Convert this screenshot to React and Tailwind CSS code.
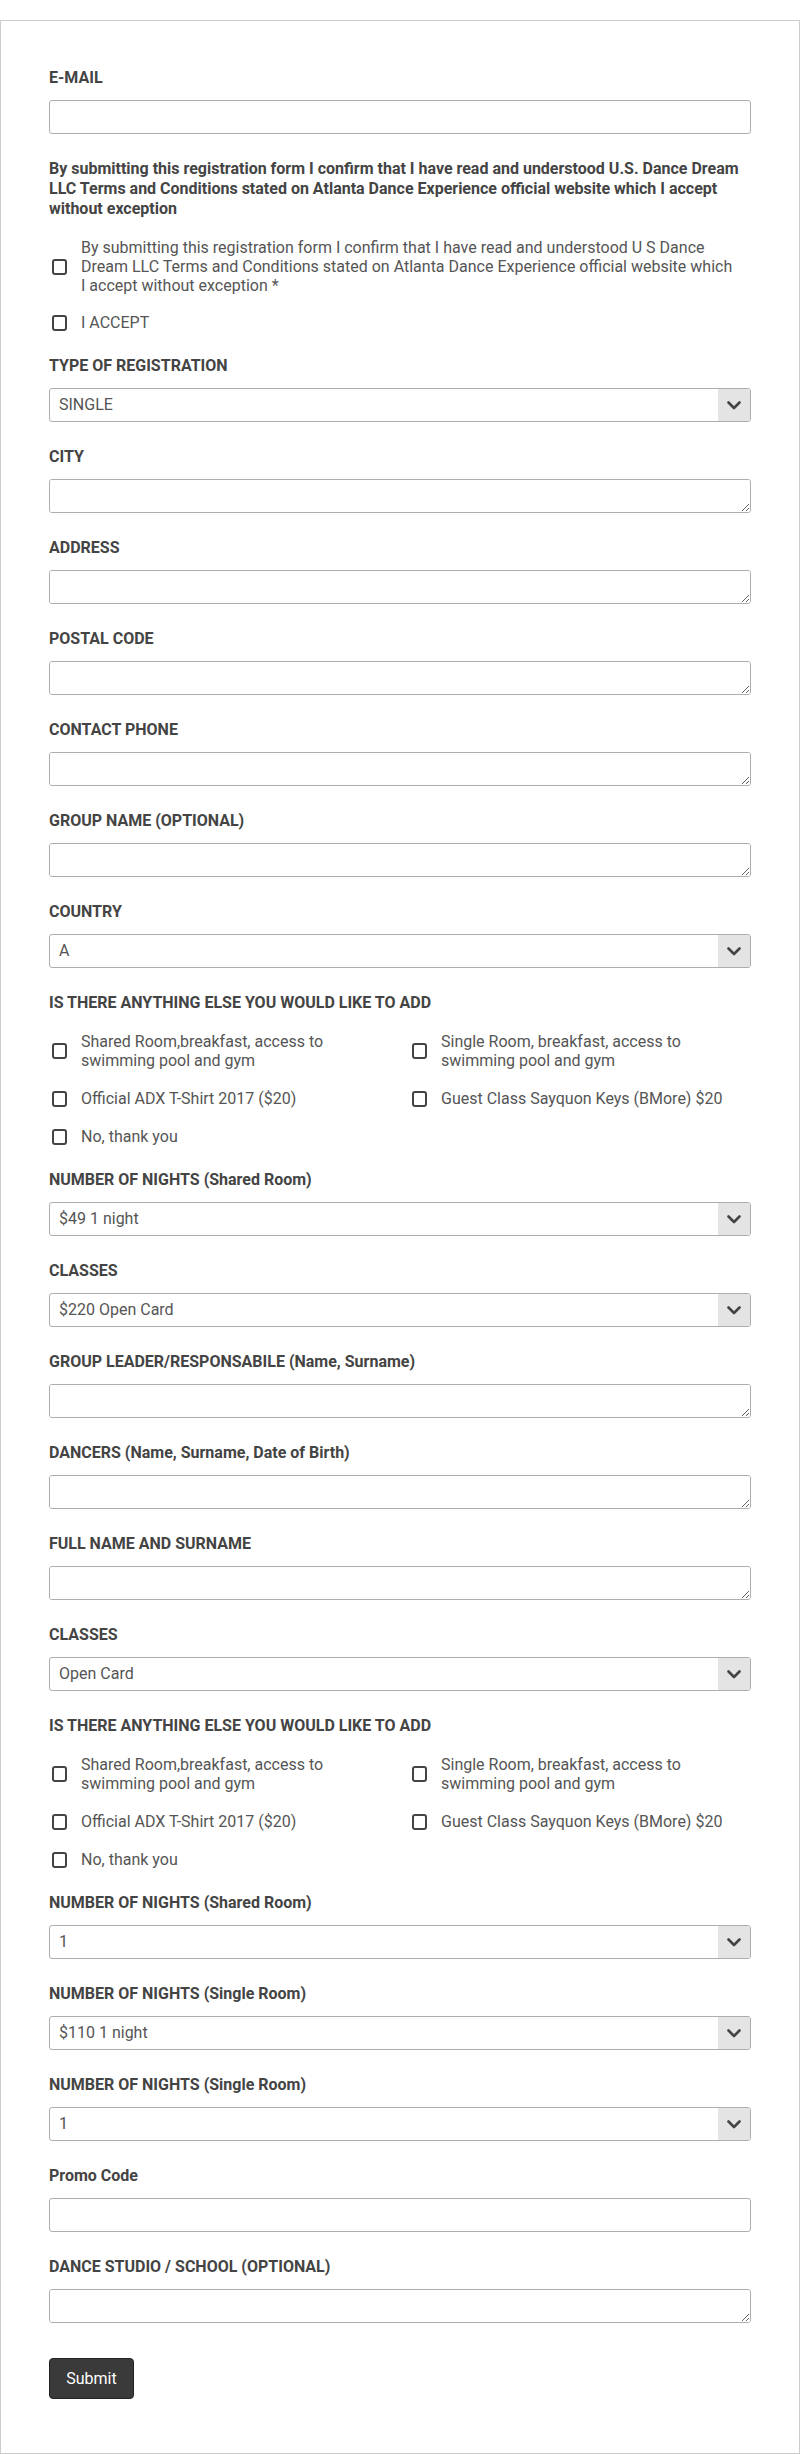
import React from "react";

const font = { fontFamily: "Roboto, 'Noto Sans', Arial, sans-serif" };

function Label({ children }) {
  return (
    <div className="text-[16px] font-bold leading-[20px] text-[#444] mb-[12px]">
      {children}
    </div>
  );
}

function TextInput({ label }) {
  return (
    <div className="mb-[25px]">
      <Label>{label}</Label>
      <input
        type="text"
        className="block w-full h-[34px] border border-[#adadad] rounded-[3px] bg-white px-[8px] text-[16px] text-[#555] outline-none"
      />
    </div>
  );
}

function TextArea({ label }) {
  return (
    <div className="mb-[25px]">
      <Label>{label}</Label>
      <textarea
        rows={1}
        className="block w-full h-[34px] min-h-[34px] border border-[#adadad] rounded-[3px] bg-white px-[8px] py-[6px] text-[16px] text-[#555] outline-none resize-y"
      />
    </div>
  );
}

function Chevron() {
  return (
    <svg width="14" height="9" viewBox="0 0 14 9" fill="none">
      <path d="M1.5 1.5 L7 7 L12.5 1.5" stroke="#444" strokeWidth="2.6" strokeLinecap="round" strokeLinejoin="round" />
    </svg>
  );
}

function Select({ label, value }) {
  return (
    <div className="mb-[25px]">
      <Label>{label}</Label>
      <div className="flex h-[34px] w-full border border-[#adadad] rounded-[3px] bg-white overflow-hidden">
        <div className="flex-1 flex items-center pl-[9px] text-[16px] text-[#555]">{value}</div>
        <div className="w-[32px] flex items-center justify-center bg-[#e4e4e4]">
          <Chevron />
        </div>
      </div>
    </div>
  );
}

function Box() {
  return (
    <span className="block shrink-0 w-[15px] h-[16px] ml-[3px] border-2 border-[#444] rounded-[3px] bg-white" />
  );
}

function Check({ children }) {
  return (
    <div className="flex items-center gap-[14px] text-[16px] leading-[19px] text-[#555]">
      <Box />
      <span>{children}</span>
    </div>
  );
}

function ExtrasGroup() {
  return (
    <div className="mb-[24px]">
      <div className="text-[16px] font-bold leading-[20px] text-[#444] mb-[19px]">
        IS THERE ANYTHING ELSE YOU WOULD LIKE TO ADD
      </div>
      <div className="grid grid-cols-[360px_1fr] gap-y-[19px]">
        <Check>
          Shared Room,breakfast, access to<br />swimming pool and gym
        </Check>
        <Check>
          Single Room, breakfast, access to<br />swimming pool and gym
        </Check>
        <Check>Official ADX T-Shirt 2017 ($20)</Check>
        <Check>Guest Class Sayquon Keys (BMore) $20</Check>
        <Check>No, thank you</Check>
      </div>
    </div>
  );
}

export default function App() {
  return (
    <div className="bg-white pt-[20px]" style={font}>
      <form
        className="flex flex-col border border-[#cccccc] bg-white px-[48px] pt-[47px] pb-[54px]"
        onSubmit={(e) => e.preventDefault()}
      >
        <TextInput label="E-MAIL" />

        <div className="text-[16px] font-bold leading-[20px] text-[#444] mb-[19px]">
          By submitting this registration form I confirm that I have read and understood U.S. Dance Dream
          <br />
          LLC Terms and Conditions stated on Atlanta Dance Experience official website which I accept
          <br />
          without exception
        </div>

        <div className="flex flex-col gap-[18px] mb-[24px]">
          <Check>
            By submitting this registration form I confirm that I have read and understood U S Dance
            <br />
            Dream LLC Terms and Conditions stated on Atlanta Dance Experience official website which
            <br />I accept without exception *
          </Check>
          <Check>I ACCEPT</Check>
        </div>

        <Select label="TYPE OF REGISTRATION" value="SINGLE" />
        <TextArea label="CITY" />
        <TextArea label="ADDRESS" />
        <TextArea label="POSTAL CODE" />
        <TextArea label="CONTACT PHONE" />
        <TextArea label="GROUP NAME (OPTIONAL)" />
        <Select label="COUNTRY" value="A" />

        <ExtrasGroup />

        <Select label="NUMBER OF NIGHTS (Shared Room)" value="$49 1 night" />
        <Select label="CLASSES" value="$220 Open Card" />
        <TextArea label="GROUP LEADER/RESPONSABILE (Name, Surname)" />
        <TextArea label="DANCERS (Name, Surname, Date of Birth)" />
        <TextArea label="FULL NAME AND SURNAME" />
        <Select label="CLASSES" value="Open Card" />

        <ExtrasGroup />

        <Select label="NUMBER OF NIGHTS (Shared Room)" value="1" />
        <Select label="NUMBER OF NIGHTS (Single Room)" value="$110 1 night" />
        <Select label="NUMBER OF NIGHTS (Single Room)" value="1" />
        <TextInput label="Promo Code" />
        <TextArea label="DANCE STUDIO / SCHOOL (OPTIONAL)" />

        <div className="pt-[10px]">
          <button
            type="submit"
            className="block h-[41px] w-[85px] rounded-[4px] border border-[#222] bg-[#3a3a3a] text-[16px] text-white"
          >
            Submit
          </button>
        </div>
      </form>
    </div>
  );
}
